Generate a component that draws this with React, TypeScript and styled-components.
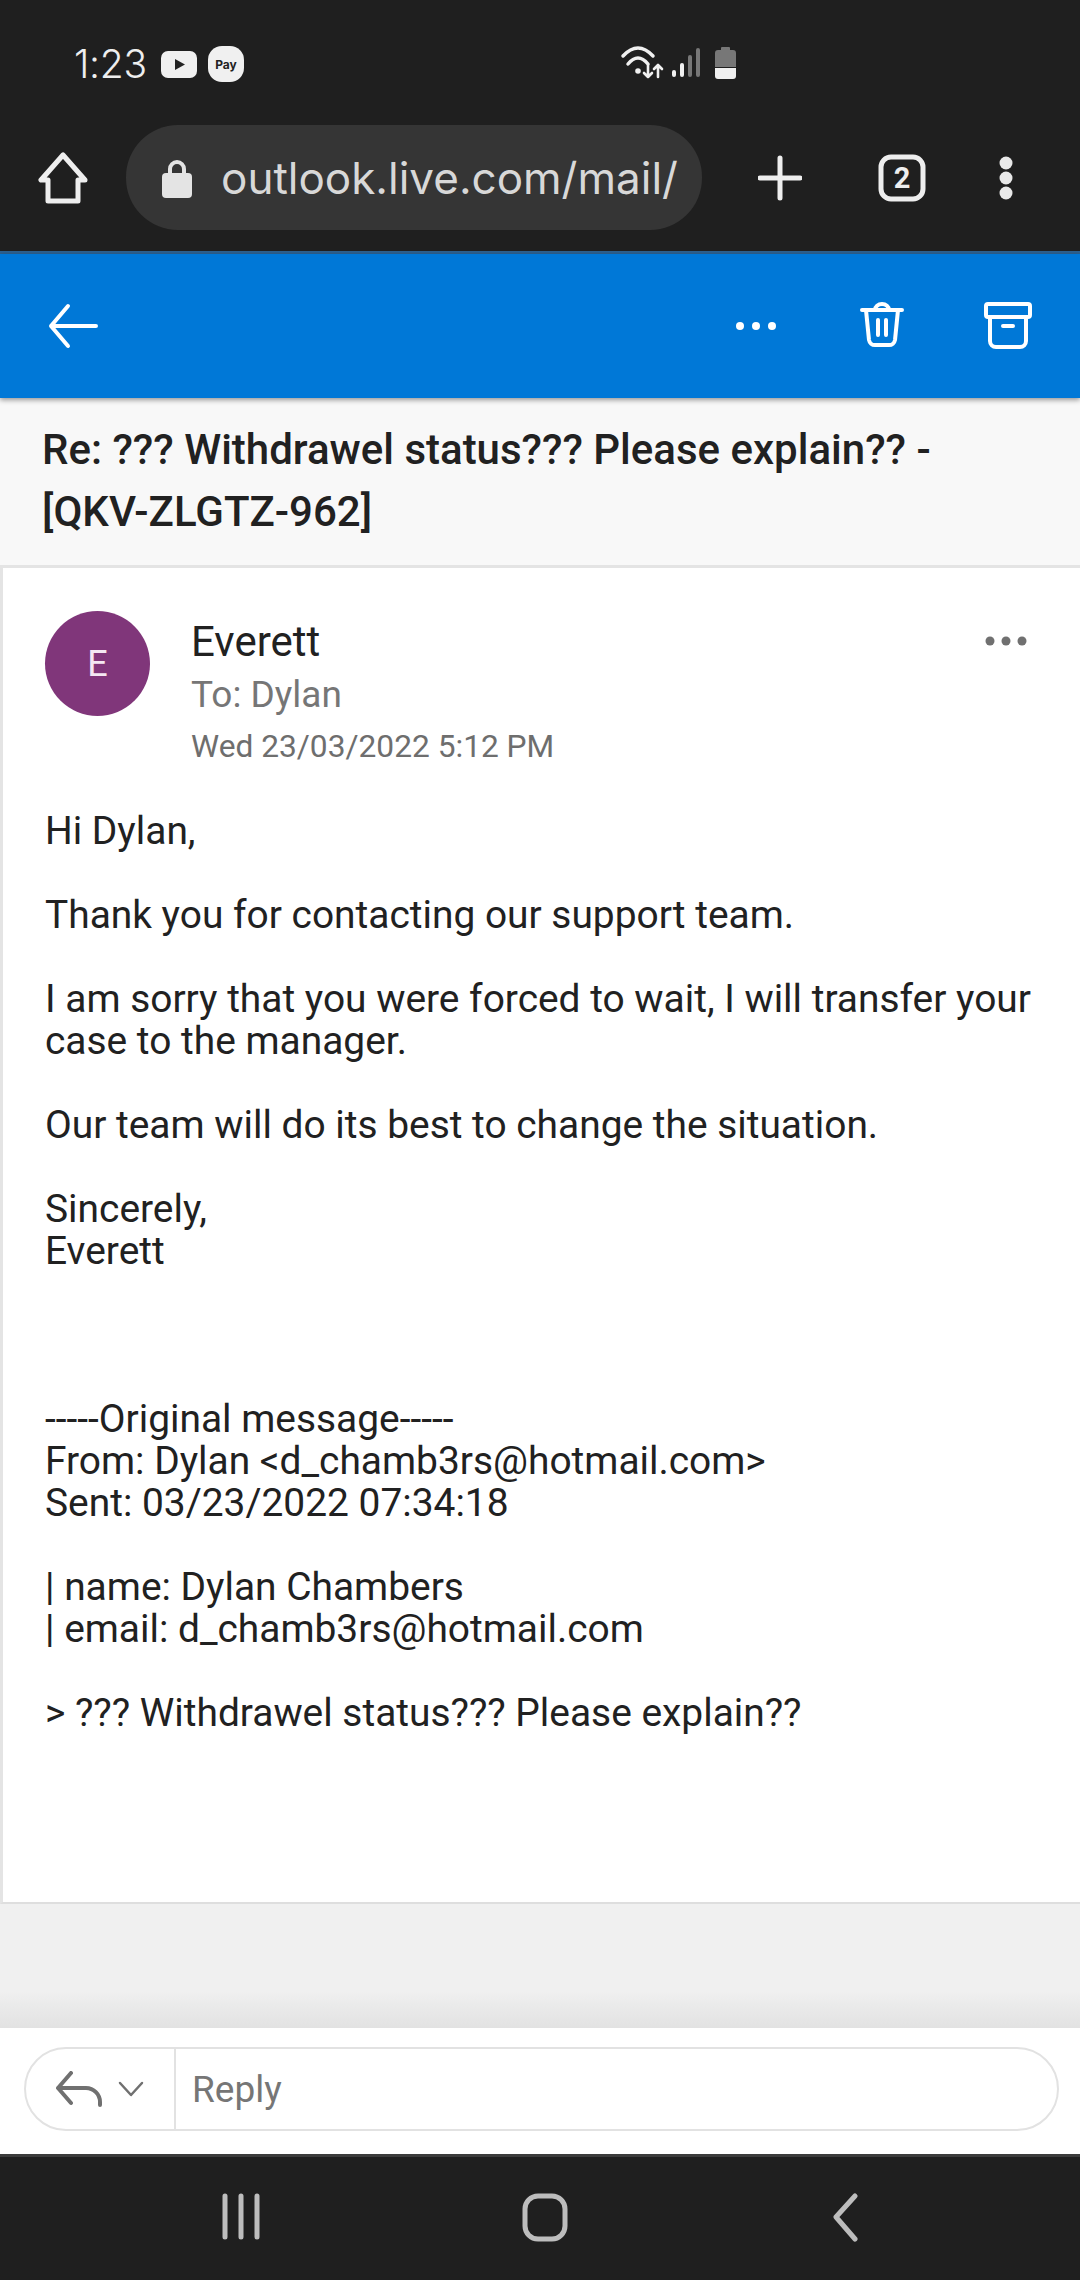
import React from "react";
import styled, { createGlobalStyle } from "styled-components";

const Global = createGlobalStyle`
  html, body { margin: 0; padding: 0; background: #fff; }
  * { box-sizing: border-box; }
  body { font-family: Roboto, "Liberation Sans", sans-serif; }
`;

const Page = styled.div`
  width: 1080px;
  height: 2280px;
  display: flex;
  flex-direction: column;
  overflow: hidden;
`;

const Chrome = styled.header`
  height: 254px;
  background: #1f1f1f;
  border-bottom: 3px solid #2c6190;
  flex: none;
`;

const StatusBar = styled.div`
  height: 125px;
  display: flex;
  align-items: flex-start;
  padding: 43px 0 0 74px;
  color: #eee;
`;

const Clock = styled.span`
  font-family: Inter, sans-serif;
  font-size: 39px;
  font-weight: 300;
  line-height: 42px;
  width: 87px;
  letter-spacing: -0.3px;
  flex: none;
`;

const StatusLeft = styled.div`
  display: flex;
  align-items: center;
  gap: 11px;
  height: 42px;
`;

const PlayBadge = styled.svg`
  width: 36px;
  height: 27px;
`;

const PayBadge = styled.span`
  width: 36px;
  height: 36px;
  border-radius: 14px;
  background: #f0f0f0;
  color: #222;
  font-size: 12px;
  font-weight: 700;
  font-family: Inter, sans-serif;
  display: flex;
  align-items: center;
  justify-content: center;
`;

const StatusRight = styled.svg`
  margin-left: 376px;
  width: 120px;
  height: 44px;
`;

const UrlRow = styled.div`
  height: 105px;
  display: flex;
  align-items: center;
  padding: 0 0 0 38px;
`;

const ChromeIcon = styled.svg<{ $w: number; $ml: number }>`
  width: ${p => p.$w}px;
  height: 60px;
  margin-left: ${p => p.$ml}px;
  flex: none;
`;

const UrlPill = styled.div`
  width: 576px;
  height: 105px;
  margin-left: 38px;
  border-radius: 52px;
  background: #353535;
  display: flex;
  align-items: center;
  padding-left: 36px;
  color: #d8d8d8;
  font-size: 44px;
  font-family: Inter, sans-serif;
  font-weight: 400;
  white-space: nowrap;
  overflow: hidden;
`;

const Lock = styled.svg`
  width: 30px;
  height: 40px;
  margin-right: 29px;
  flex: none;
`;

const BlueBar = styled.div`
  height: 144px;
  flex: none;
  background: #0078d7;
  box-shadow: 0 2px 5px rgba(0, 0, 0, 0.4);
  display: flex;
  align-items: center;
  position: relative;
  z-index: 1;
  padding: 0 0 0 48px;
`;

const BarIcon = styled.svg<{ $ml?: number }>`
  width: 50px;
  height: 50px;
  flex: none;
  margin-left: ${p => p.$ml ?? 0}px;
`;

const Subject = styled.h1`
  margin: 0;
  height: 170px;
  flex: none;
  background: #f8f8f8;
  border-bottom: 3px solid #e4e4e4;
  padding: 21px 80px 0 42px;
  font-size: 42px;
  line-height: 62px;
  font-weight: 500;
  color: #212121;
`;

const Message = styled.section`
  height: 1336px;
  flex: none;
  background: #fff;
  border-left: 3px solid #e4e4e4;
  border-bottom: 2px solid #dedede;
  padding: 43px 0 0 42px;
`;

const MessageHead = styled.div`
  display: flex;
  align-items: flex-start;
  height: 199px;
`;

const Avatar = styled.div`
  width: 105px;
  height: 105px;
  border-radius: 50%;
  background: #80367a;
  color: #f4e8f3;
  font-size: 36px;
  display: flex;
  align-items: center;
  justify-content: center;
  flex: none;
`;

const Meta = styled.div`
  margin-left: 41px;
  flex: 1;
`;

const Sender = styled.div`
  font-size: 42px;
  line-height: 58px;
  color: #212121;
  margin-top: 2px;
`;

const Recipient = styled.div`
  font-size: 37px;
  line-height: 46px;
  color: #767676;
  margin-top: 1px;
`;

const Sent = styled.div`
  font-size: 31.7px;
  line-height: 40px;
  color: #6e6e6e;
  margin-top: 9px;
`;

const MoreDots = styled.svg`
  width: 44px;
  height: 12px;
  margin: 24px 52px 0 0;
  flex: none;
`;

const Body = styled.div`
  font-size: 38.9px;
  line-height: 42px;
  color: #212121;
  padding-right: 30px;
  white-space: pre-wrap;
`;

const GreyArea = styled.div`
  height: 124px;
  flex: none;
  background: linear-gradient(#f0f0f0 70%, #e2e2e2 100%);
`;

const ReplyBar = styled.div`
  height: 126px;
  flex: none;
  background: #fff;
  padding: 19px 21px 23px 24px;
`;

const ReplyBox = styled.div`
  height: 84px;
  border: 2px solid #e2e2e2;
  border-radius: 42px;
  display: flex;
  align-items: stretch;
`;

const ReplyActions = styled.div`
  width: 150px;
  flex: none;
  border-right: 2px solid #e2e2e2;
  display: flex;
  align-items: center;
  padding-left: 29px;
  gap: 15px;
`;

const ReplyLabel = styled.div`
  font-size: 37px;
  color: #767676;
  display: flex;
  align-items: center;
  padding-left: 16px;
`;

const NavBar = styled.nav`
  flex: 1;
  background: #1f1f1f;
  border-top: 3px solid #3b3b3b;
  display: flex;
  align-items: flex-start;
  padding: 36px 0 0 219px;
`;

const NavIcon = styled.svg<{ $w: number; $ml: number }>`
  width: ${p => p.$w}px;
  height: 50px;
  margin-left: ${p => p.$ml}px;
`;

const messageText = `Hi Dylan,

Thank you for contacting our support team.

I am sorry that you were forced to wait, I will transfer your
case to the manager.

Our team will do its best to change the situation.

Sincerely,
Everett



-----Original message-----
From: Dylan <d_chamb3rs@hotmail.com>
Sent: 03/23/2022 07:34:18

| name: Dylan Chambers
| email: d_chamb3rs@hotmail.com

> ??? Withdrawel status??? Please explain??`;

export default function App() {
  return (
    <Page>
      <Global />
      <Chrome>
        <StatusBar>
          <Clock>1:23</Clock>
          <StatusLeft>
            <PlayBadge viewBox="0 0 36 27">
              <rect width="36" height="27" rx="7" fill="#f0f0f0" />
              <path d="M14 8l10 5.5-10 5.5z" fill="#222" />
            </PlayBadge>
            <PayBadge>Pay</PayBadge>
          </StatusLeft>
          <StatusRight viewBox="0 0 120 44" fill="none">
            <g stroke="#f0f0f0" strokeWidth="3.5" strokeLinecap="round" strokeLinejoin="round">
              <path d="M3 13Q18 -3 33 13" />
              <path d="M8 21Q18 9 28 21" />
              <path d="M28 22v12m-4-4l4 4 4-4M38 34V22m-4 4l4-4 4 4" strokeWidth="2.6" />
            </g>
            <circle cx="18" cy="28" r="2.8" fill="#f0f0f0" />
            <rect x="52" y="27" width="4" height="7" rx="2" fill="#f0f0f0" />
            <rect x="60" y="20" width="4" height="14" rx="2" fill="#f0f0f0" />
            <rect x="68" y="12" width="4" height="22" rx="2" fill="#777" />
            <rect x="76" y="5" width="4" height="29" rx="2" fill="#777" />
            <path d="M95 10a3 3 0 0 1 3-3h3V5a1 1 0 0 1 1-1h7a1 1 0 0 1 1 1v2h3a3 3 0 0 1 3 3v14H95z" fill="#777" />
            <path d="M95 25h21v8a3 3 0 0 1-3 3H98a3 3 0 0 1-3-3z" fill="#f0f0f0" />
          </StatusRight>
        </StatusBar>
        <UrlRow>
          <ChromeIcon $w={50} $ml={0} viewBox="0 0 50 60" fill="none" stroke="#eee" strokeWidth="5" strokeLinejoin="round">
            <path d="M25 7L3 32h7v21h30V32h7z" />
          </ChromeIcon>
          <UrlPill>
            <Lock viewBox="0 0 30 40">
              <path d="M8 17v-6a7 7 0 0 1 14 0v6" fill="none" stroke="#e4e4e4" strokeWidth="4" />
              <rect y="15" width="30" height="25" rx="4" fill="#e4e4e4" />
            </Lock>
            outlook.live.com/mail/
          </UrlPill>
          <ChromeIcon $w={44} $ml={56} viewBox="0 0 44 60" fill="none" stroke="#eee" strokeWidth="5" strokeLinecap="round">
            <path d="M22 10v40M2 30h40" />
          </ChromeIcon>
          <ChromeIcon $w={48} $ml={76} viewBox="0 0 48 60">
            <rect x="3" y="9" width="42" height="42" rx="10" fill="none" stroke="#eee" strokeWidth="5" />
            <text x="24" y="40" textAnchor="middle" fontSize="29" fontWeight="700" fontFamily="Roboto" fill="#eee">2</text>
          </ChromeIcon>
          <ChromeIcon $w={16} $ml={72} viewBox="0 0 16 60" fill="#e8e8e8">
            <circle cx="8" cy="15" r="6.500" />
            <circle cx="8" cy="30" r="6.500" />
            <circle cx="8" cy="45" r="6.500" />
          </ChromeIcon>
        </UrlRow>
      </Chrome>

      <BlueBar>
        <BarIcon viewBox="0 0 50 50" fill="none" stroke="#fff" strokeWidth="4" strokeLinecap="round" strokeLinejoin="round">
          <path d="M48 25H3M20 5L3 25l17 20" />
        </BarIcon>
        <BarIcon $ml={633} viewBox="0 0 50 50" fill="#fff">
          <circle cx="9" cy="25" r="4" />
          <circle cx="25" cy="25" r="4" />
          <circle cx="41" cy="25" r="4" />
        </BarIcon>
        <BarIcon $ml={76} viewBox="0 0 50 50" fill="none" stroke="#fff" strokeWidth="4" strokeLinecap="round" strokeLinejoin="round">
          <path d="M5 9h40M18 9a7 6 0 0 1 14 0M9 9l3 30a6 6 0 0 0 6 5h14a6 6 0 0 0 6-5l3-30M21 19v15M29 19v15" />
        </BarIcon>
        <BarIcon $ml={76} viewBox="0 0 50 50" fill="none" stroke="#fff" strokeWidth="4" strokeLinecap="round" strokeLinejoin="round">
          <rect x="3" y="3" width="44" height="13" rx="2" />
          <path d="M7 16v24a6 6 0 0 0 6 6h24a6 6 0 0 0 6-6V16M20 25h10" />
        </BarIcon>
      </BlueBar>

      <Subject>Re: ??? Withdrawel status??? Please explain?? - [QKV-ZLGTZ-962]</Subject>

      <Message>
        <MessageHead>
          <Avatar>E</Avatar>
          <Meta>
            <Sender>Everett</Sender>
            <Recipient>To: Dylan</Recipient>
            <Sent>Wed 23/03/2022 5:12 PM</Sent>
          </Meta>
          <MoreDots viewBox="0 0 44 12" fill="#707070">
            <circle cx="6" cy="6" r="4.5" />
            <circle cx="22" cy="6" r="4.5" />
            <circle cx="38" cy="6" r="4.5" />
          </MoreDots>
        </MessageHead>
        <Body>{messageText}</Body>
      </Message>

      <GreyArea />

      <ReplyBar>
        <ReplyBox>
          <ReplyActions>
            <svg width="48" height="36" viewBox="0 0 48 36" fill="none" stroke="#707070" strokeWidth="4" strokeLinecap="round" strokeLinejoin="round">
              <path d="M16 2L3 17l13 15M3 17h28a14 14 0 0 1 14 14v3" />
            </svg>
            <svg width="26" height="16" viewBox="0 0 26 16" fill="none" stroke="#707070" strokeWidth="2.5" strokeLinecap="round" strokeLinejoin="round">
              <path d="M2 2l11 12L24 2" />
            </svg>
          </ReplyActions>
          <ReplyLabel>Reply</ReplyLabel>
        </ReplyBox>
      </ReplyBar>

      <NavBar>
        <NavIcon $w={44} $ml={0} viewBox="0 0 44 50" stroke="#bdbdbd" strokeWidth="5" strokeLinecap="round">
          <path d="M6 3v41M22 3v41M38 3v41" />
        </NavIcon>
        <NavIcon $w={46} $ml={259} viewBox="0 0 46 50" fill="none" stroke="#bdbdbd" strokeWidth="5">
          <rect x="3" y="3" width="40" height="43" rx="13" />
        </NavIcon>
        <NavIcon $w={26} $ml={264} viewBox="0 0 26 50" fill="none" stroke="#bdbdbd" strokeWidth="5" strokeLinecap="round" strokeLinejoin="round">
          <path d="M23 3L4 24l19 22" />
        </NavIcon>
      </NavBar>
    </Page>
  );
}
